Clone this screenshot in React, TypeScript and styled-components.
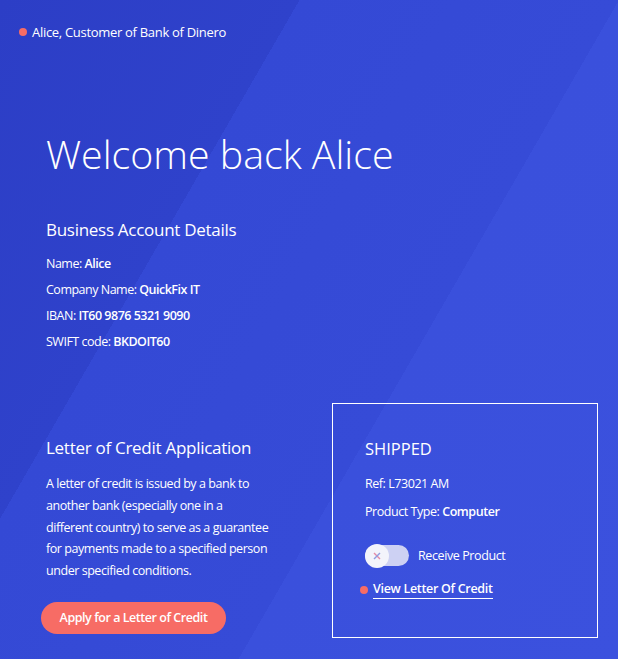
import React from "react";
import styled, { createGlobalStyle } from "styled-components";

const Global = createGlobalStyle`
  html, body { margin: 0; padding: 0; }
  body { font-family: "Open Sans", "Noto Sans", sans-serif; color: #fff; }
  * { box-sizing: border-box; }
`;

const Page = styled.div`
  width: 618px;
  height: 659px;
  overflow: hidden;
  background: linear-gradient(
    120deg,
    #2c3ec6 0%,
    #2f42cb 30%,
    #3449d5 30%,
    #364bd7 62%,
    #3a50dc 62%,
    #3b51de 100%
  );
  font-family: "Open Sans", "Noto Sans", sans-serif;
  color: #fff;
`;

const Header = styled.div`
  display: flex;
  align-items: center;
  gap: 5px;
  padding: 24px 0 0 19px;
  font-size: 13px;
  line-height: 16px;
  letter-spacing: -0.3px;
`;

const Dot = styled.span`
  width: 8px;
  height: 8px;
  border-radius: 50%;
  background: #f76c65;
  flex: none;
`;

const Content = styled.div`
  padding: 0 20px 0 46px;
`;

const Title = styled.h1`
  margin: 90px 0 0;
  font-size: 39.3px;
  line-height: 48px;
  font-weight: 300;
`;

const SectionTitle = styled.h2<{ $top: number }>`
  margin: ${(p) => p.$top}px 0 0;
  font-size: 17px;
  line-height: 24px;
  font-weight: 400;
  letter-spacing: -0.28px;
`;

const DetailList = styled.div`
  margin-top: 9px;
  display: flex;
  flex-direction: column;
`;

const Detail = styled.div`
  font-size: 12.5px;
  line-height: 26px;
  letter-spacing: -0.5px;
  b { font-weight: 600; }
`;

const Bottom = styled.div`
  margin-top: 48px;
  display: grid;
  grid-template-columns: 286px 266px;
  align-items: start;
`;

const LeftCol = styled.div`
  padding-top: 33px;
`;

const Paragraph = styled.p`
  margin: 13px 0 0;
  font-size: 12.5px;
  line-height: 21.75px;
  letter-spacing: -0.45px;
  white-space: nowrap;
`;

const Button = styled.button`
  margin: 20px 0 0 -5px;
  width: 185px;
  height: 32px;
  border: none;
  border-radius: 16px;
  background: #f76c65;
  color: #fff;
  font-family: "Open Sans", "Noto Sans", sans-serif;
  font-size: 12.5px;
  letter-spacing: -0.45px;
  font-weight: 600;
  padding: 0;
  cursor: pointer;
`;

const Card = styled.div`
  border: 1px solid #fff;
  height: 235px;
  padding: 33px 0 0 32px;
`;

const CardTitle = styled.div`
  font-size: 16.5px;
  line-height: 24px;
  font-weight: 400;
`;

const CardLine = styled.div<{ $top: number }>`
  margin-top: ${(p) => p.$top}px;
  font-size: 12.5px;
  line-height: 18px;
  letter-spacing: -0.45px;
  b { font-weight: 600; }
`;

const ToggleRow = styled.div`
  margin-top: 24px;
  display: flex;
  align-items: center;
  gap: 9px;
  font-size: 12.5px;
  letter-spacing: -0.4px;
`;

const Track = styled.div`
  position: relative;
  width: 44px;
  height: 21px;
  border-radius: 11px;
  background: #cdd1f3;
  flex: none;
`;

const Knob = styled.div`
  position: absolute;
  left: 0;
  top: -1.5px;
  width: 24px;
  height: 24px;
  border-radius: 50%;
  background: #f3f4fb;
  display: flex;
  align-items: center;
  justify-content: center;
`;

const LinkRow = styled.div`
  margin: 14px 0 0 -5px;
  display: flex;
  align-items: center;
  gap: 5px;
`;

const Link = styled.a`
  color: #fff;
  font-size: 12.5px;
  letter-spacing: -0.3px;
  font-weight: 600;
  line-height: 18px;
  text-decoration: none;
  border-bottom: 1.5px solid #fff;
`;

export default function App() {
  return (
    <Page>
      <Global />
      <Header>
        <Dot />
        <span>Alice, Customer of Bank of Dinero</span>
      </Header>
      <Content>
        <Title>Welcome back Alice</Title>
        <SectionTitle $top={40}>Business Account Details</SectionTitle>
        <DetailList>
          <Detail>
            Name: <b>Alice</b>
          </Detail>
          <Detail>
            Company Name: <b>QuickFix IT</b>
          </Detail>
          <Detail>
            IBAN: <b>IT60 9876 5321 9090</b>
          </Detail>
          <Detail>
            SWIFT code: <b>BKDOIT60</b>
          </Detail>
        </DetailList>
        <Bottom>
          <LeftCol>
            <SectionTitle $top={0}>Letter of Credit Application</SectionTitle>
            <Paragraph>
              A letter of credit is issued by a bank to
              <br />
              another bank (especially one in a
              <br />
              different country) to serve as a guarantee
              <br />
              for payments made to a specified person
              <br />
              under specified conditions.
            </Paragraph>
            <Button>Apply for a Letter of Credit</Button>
          </LeftCol>
          <Card>
            <CardTitle>SHIPPED</CardTitle>
            <CardLine $top={14}>Ref: L73021 AM</CardLine>
            <CardLine $top={10}>
              Product Type: <b>Computer</b>
            </CardLine>
            <ToggleRow>
              <Track>
                <Knob>
                  <svg width="10" height="10" viewBox="0 0 10 10">
                    <path d="M2 2 L8 8" stroke="#e58aa6" strokeWidth="1.4" />
                    <path d="M8 2 L2 8" stroke="#8f9be0" strokeWidth="1.4" />
                  </svg>
                </Knob>
              </Track>
              <span>Receive Product</span>
            </ToggleRow>
            <LinkRow>
              <Dot />
              <Link href="#">View Letter Of Credit</Link>
            </LinkRow>
          </Card>
        </Bottom>
      </Content>
    </Page>
  );
}
